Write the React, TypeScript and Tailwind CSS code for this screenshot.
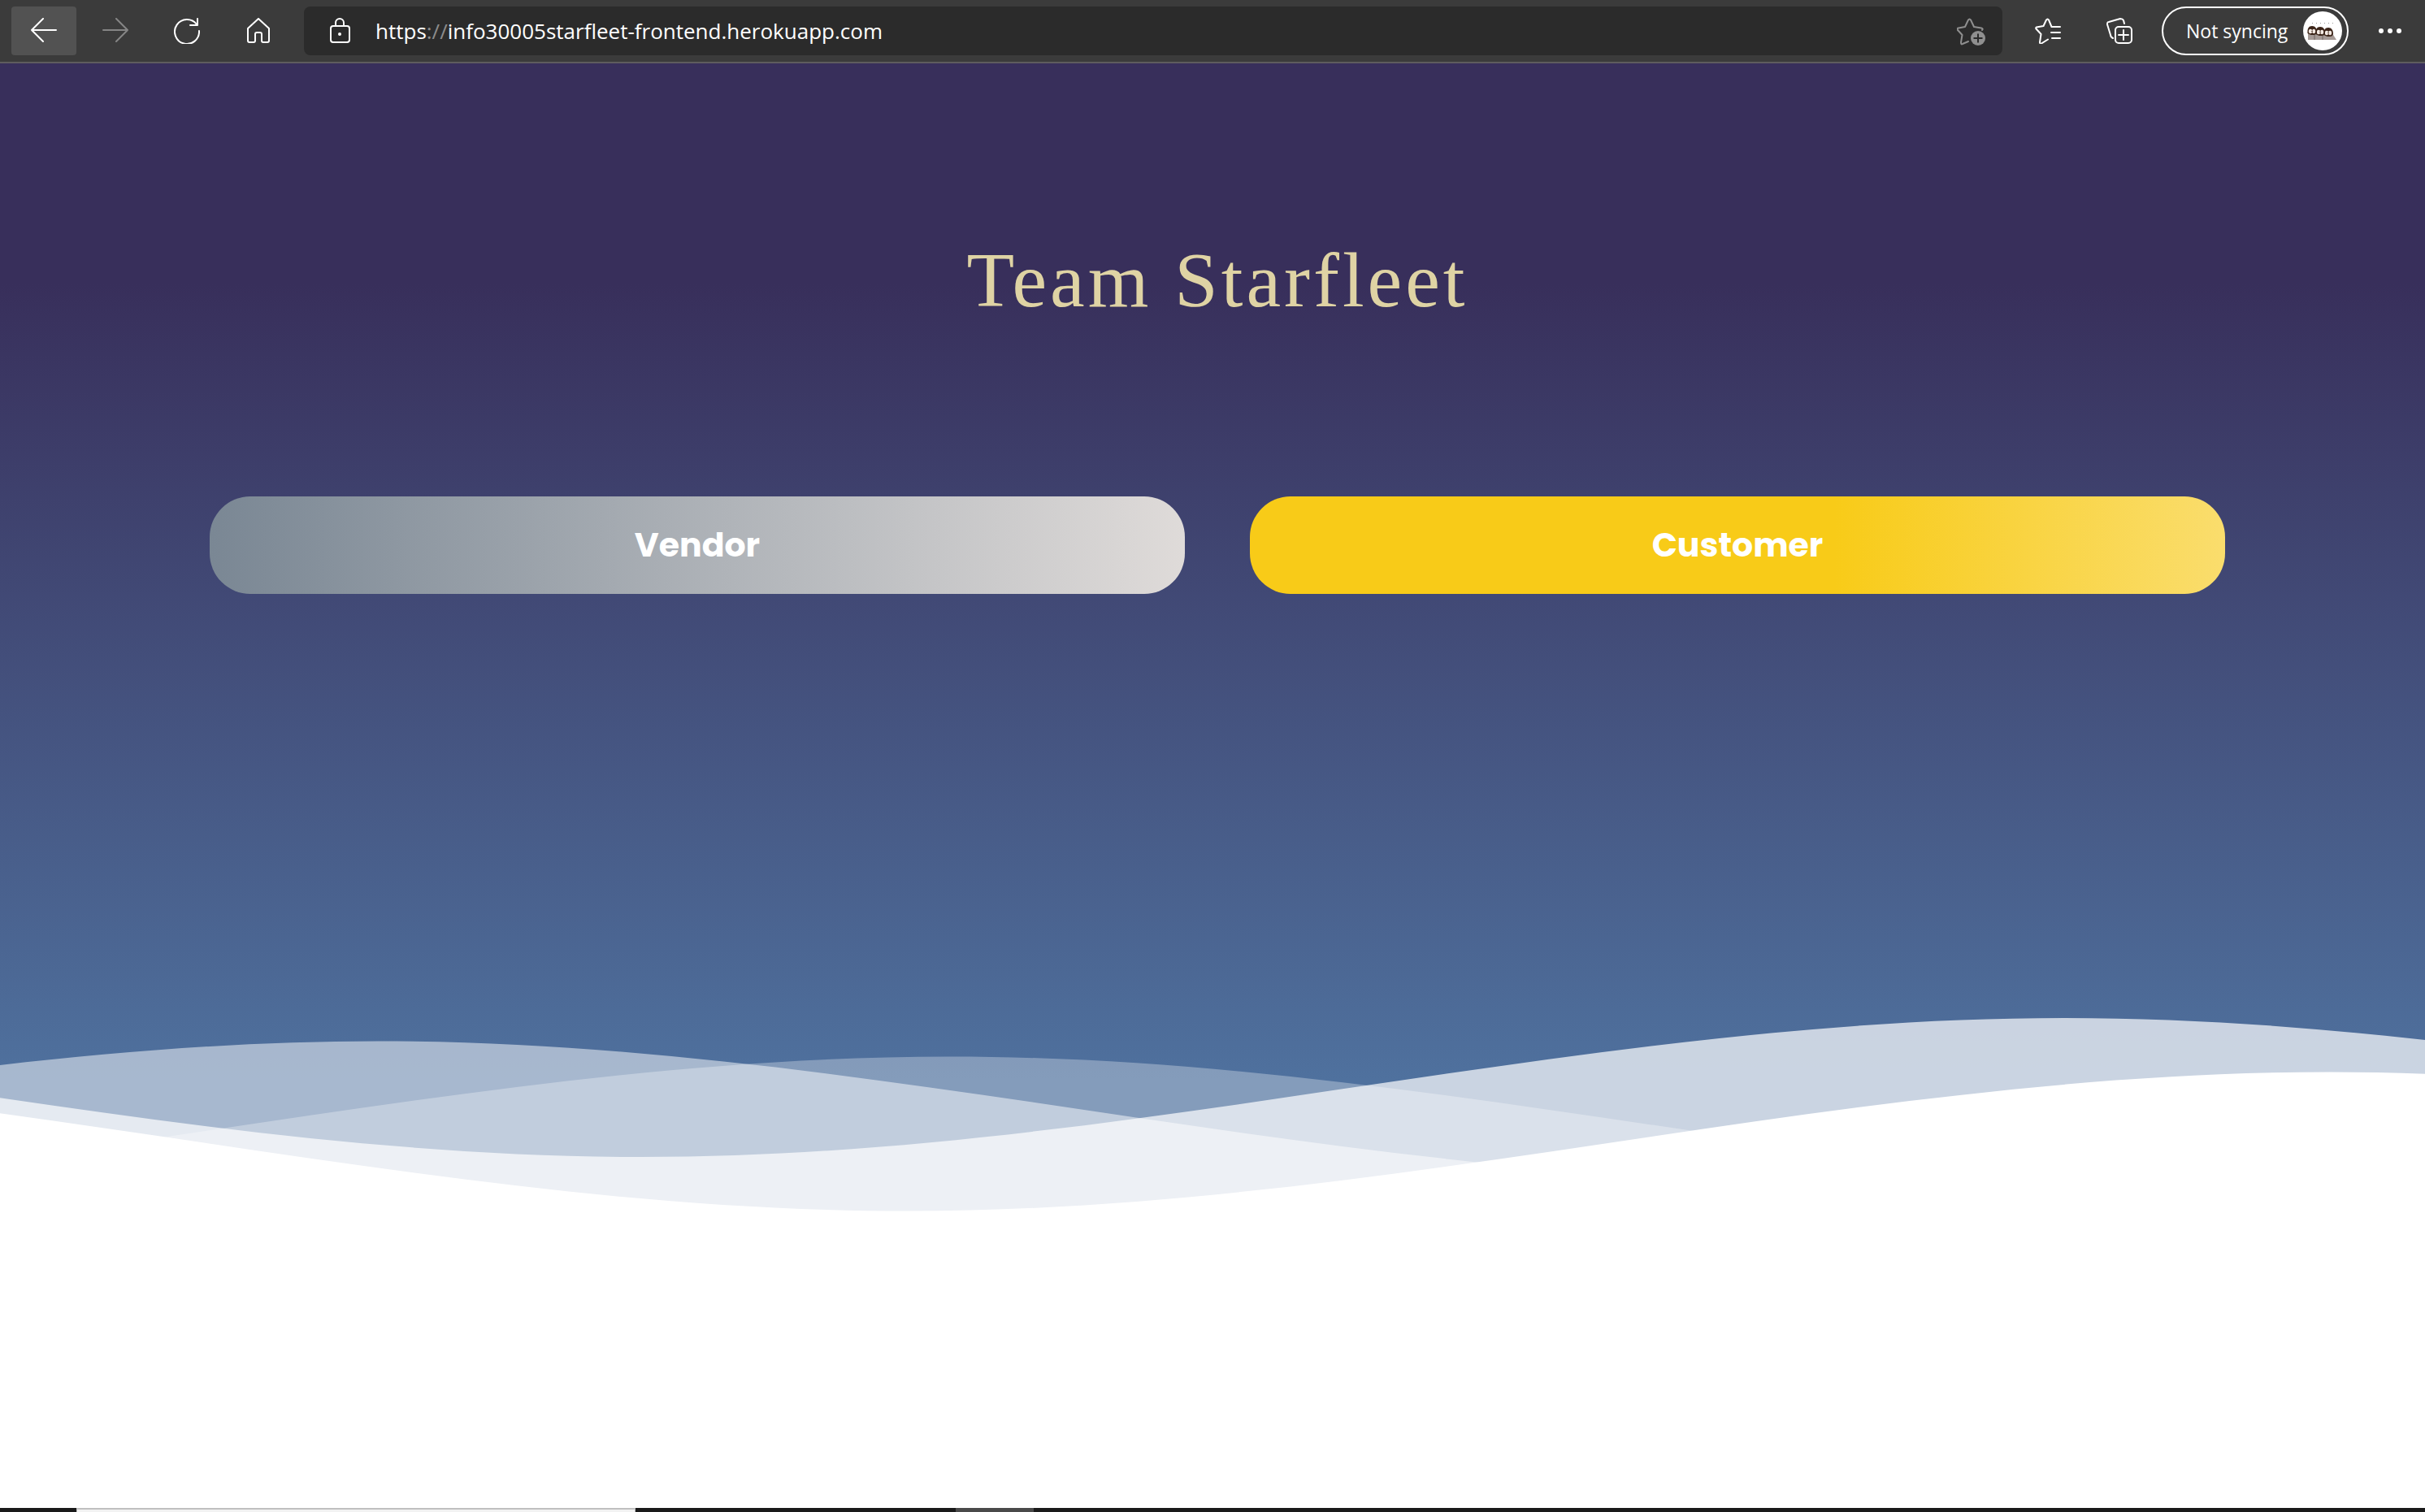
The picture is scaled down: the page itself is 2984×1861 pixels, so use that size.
import React from "react";

const wave = "M-160 44c30 0 58-18 88-18s58 18 88 18 58-18 88-18 58 18 88 18v44h-352z";
const iconButton = "flex h-[60px] items-center justify-center rounded-[4px]";

function Line({ children, className = "" }: { children: React.ReactNode; className?: string }) {
  return (
    <svg viewBox="0 0 32 32" className={`size-8 shrink-0 ${className}`} fill="none" stroke="currentColor" strokeWidth="2" strokeLinecap="round" strokeLinejoin="round" aria-hidden="true">
      {children}
    </svg>
  );
}

function PenguinHead({ x, y }: { x: number; y: number }) {
  return (
    <g transform={`translate(${x} ${y})`}>
      <path d="M-5.500 4C-6-2-4-5 0-5s6 3 6 8l-1 2c-3 2-8 1-10.500-1z" fill="#3b2418" />
      <ellipse cx="-2" cy="1.500" rx="2.200" ry="2.800" fill="#f3e9e2" />
      <ellipse cx="2.200" cy="1.500" rx="2" ry="2.800" fill="#f3e9e2" />
      <circle cx="0" cy="1.500" r="0.800" fill="#3b2418" />
    </g>
  );
}

function Toolbar() {
  return (
    <header className="flex h-[78px] shrink-0 items-center border-b-2 border-[#5e5c5e] bg-[#3b3b3b] pl-3.5 text-white">
      <nav aria-label="Browser" className="flex gap-2">
        <button type="button" aria-label="Back" className={`${iconButton} w-20 bg-[#525252]`}>
          <Line><path d="M31 15H1M15 1 1 15l14 14" /></Line>
        </button>
        <button type="button" aria-label="Forward" className={`${iconButton} w-20 text-[#858585]`}>
          <Line><path d="M1 15h30M17 1l14 14-14 14" /></Line>
        </button>
        <button type="button" aria-label="Refresh" className={`${iconButton} w-20`}>
          <Line><path d="M28 8A15 15 0 1 0 31 16M29 1v8h-9" /></Line>
        </button>
        <button type="button" aria-label="Home" className={`${iconButton} w-20`}>
          <Line><path d="M3 13 16 1l13 12v15a2 2 0 0 1-2 2h-5a2 2 0 0 1-2-2v-8a2 2 0 0 0-2-2h-4a2 2 0 0 0-2 2v8a2 2 0 0 1-2 2H5a2 2 0 0 1-2-2z" /></Line>
        </button>
      </nav>
      <div className="ml-4 flex h-[60px] grow items-center rounded-lg bg-[#2b2b2b] pr-5 pl-7">
        <Line>
          <path d="M11 10V6a5 5 0 0 1 10 0v4" />
          <rect x="5" y="10" width="23" height="20" rx="3" />
          <circle cx="16" cy="20" r="1" fill="currentColor" />
        </Line>
        <a href="https://info30005starfleet-frontend.herokuapp.com" className="ml-7 text-[26px] leading-9">
          https<span className="text-[#8c8c8c]">://</span>info30005starfleet-frontend.herokuapp.com
        </a>
        <button type="button" aria-label="Add to favorites" className="ml-auto text-[#8f8f8f]">
          <svg viewBox="0 0 36 36" className="size-9" aria-hidden="true">
            <path d="M14 31 7 34c-1.500 1-2 0-2-2l1.500-9-5.500-6c-1-1-1-2 1-2.500l8-1.500 4-8.500c1-1.500 2-1.500 3 0l4 8.500 9 1.500c2 .5 2 1.500 1 2.500" fill="none" stroke="currentColor" strokeWidth="2" strokeLinecap="round" strokeLinejoin="round" />
            <circle cx="26" cy="27" r="9" fill="currentColor" />
            <path d="M26 21.500v11M20.500 27h11" stroke="#2b2b2b" strokeWidth="2" />
          </svg>
        </button>
      </div>
      <div className="ml-4 flex items-center">
        <button type="button" aria-label="Favorites" className={`${iconButton} w-20`}>
          <Line><path d="M20.500 11H31M20 18h11M21 25h10M20.500 11 17 2.500c-1-1.500-2-1.500-3 0L10.500 10 2 11.500c-1 .5-1 1.500-.5 2L7.500 20 6 30c0 1.500 1 2 2 1.500l8-5" /></Line>
        </button>
        <button type="button" aria-label="Collections" className={`${iconButton} ml-2 w-20`}>
          <Line>
            <path d="M8 25c-2-1-3-3-3-4L1 8c0-2 0-3 2-3l14-4c2 0 3 0 4 2l1 4" />
            <rect x="11" y="11" width="20" height="20" rx="4" />
            <path d="M21 15v12M15 21h12" />
          </Line>
        </button>
        <button type="button" className="ml-3 flex h-[60px] w-[230px] items-center justify-between rounded-full border-2 border-white pr-1.5 pl-7 text-[23px] whitespace-nowrap">
          Not syncing
          <svg viewBox="0 0 48 48" className="size-12" aria-hidden="true">
            <circle cx="24" cy="24" r="24" fill="#fff" />
            <path d="M11 14.500h27" stroke="#999" strokeDasharray="1 4" />
            <path d="M6 35V24h28l7 11z" fill="#a59a96" />
            <path d="M14 35v-7M24 35v-7" stroke="#6f625e" />
            <PenguinHead x={31} y={25} />
            <PenguinHead x={21} y={24} />
            <PenguinHead x={11} y={23} />
          </svg>
        </button>
        <button type="button" aria-label="Settings and more" className={`${iconButton} ml-2 w-[86px]`}>
          <svg viewBox="0 0 28 8" className="h-2 w-7" fill="currentColor" aria-hidden="true">
            <circle cx="3" cy="4" r="3" /><circle cx="14" cy="4" r="3" /><circle cx="25" cy="4" r="3" />
          </svg>
        </button>
      </div>
    </header>
  );
}

export default function App() {
  return (
    <div className="flex min-h-screen flex-col bg-white font-['Open_Sans',sans-serif]">
      <Toolbar />
      <main className="flex grow flex-col">
        <section className="flex grow flex-col bg-linear-to-b/srgb from-[#382f5b] from-19% to-[#4f719e] to-88%">
          <div className="flex flex-col pt-[207px] pl-3">
            <h1 className="text-center font-['Liberation_Serif',serif] text-[96px] leading-[120px] tracking-[4px] text-[#dfd3a4]">Team Starfleet</h1>
            <div className="mx-auto mt-[206px] grid w-[2480px] max-w-full grid-cols-2 gap-20 font-['Poppins','Inter',sans-serif] text-[41px] font-bold text-white">
              <button type="button" className="h-[120px] rounded-[50px] bg-linear-to-r/srgb from-[#7a8794] to-[#dfdbd9]">Vendor</button>
              <button type="button" className="h-[120px] rounded-[50px] bg-linear-to-r/srgb from-[#f8cb18] from-60% to-[#fadd6d]">Customer</button>
            </div>
          </div>
          <svg className="mt-auto h-[266px] w-full" viewBox="0 24 150 28" preserveAspectRatio="none" fill="#fff" aria-hidden="true">
            <path d={wave} transform="translate(23.7 0)" opacity="0.7" />
            <path d={wave} transform="translate(95.4 3)" opacity="0.5" />
            <path d={wave} transform="translate(130.7 5)" opacity="0.3" />
            <path d={wave} transform="translate(40.1 7)" />
          </svg>
        </section>
        <div className="h-[356px] bg-white" />
      </main>
      <footer className="flex h-[5px] bg-[#1a1a1a]">
        <div className="ml-[94px] w-[688px] border-x border-t-2 border-[#c0c0c0] bg-[#f2f2f2]" />
        <div className="ml-[394px] w-[96px] bg-[#4a4a4a]" />
      </footer>
    </div>
  );
}
